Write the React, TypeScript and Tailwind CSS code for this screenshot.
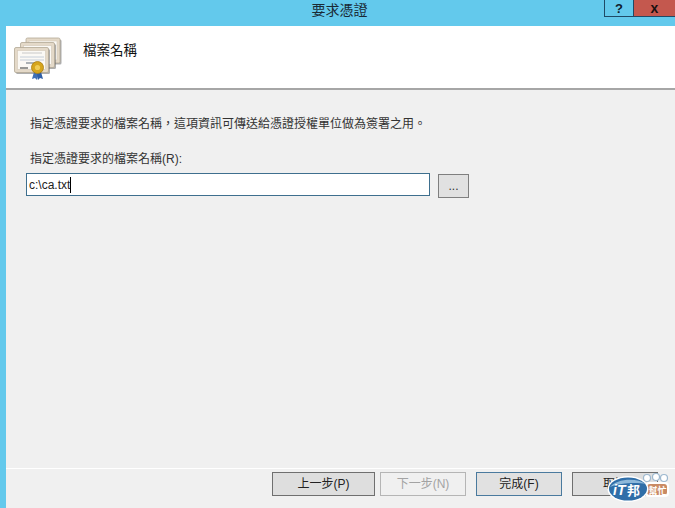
const font = "font-['Liberation_Sans','Noto_Sans_CJK_TC',sans-serif]";

function CertificateIcon() {
  const sheet = (x: number, y: number) => (
    <g>
      <rect x={x + 1.5} y={y + 1.5} width="34" height="25" rx="1.5" fill="#6b6b6b" opacity="0.55" />
      <rect x={x} y={y} width="34" height="25" rx="1.5" fill="#e4d9c8" stroke="#b3a895" strokeWidth="0.8" />
      <rect x={x + 3} y={y + 3} width="28" height="19" fill="#fbf9f5" stroke="#d3c9b8" strokeWidth="0.6" />
    </g>
  );
  return (
    <svg width="50" height="44" viewBox="0 0 50 44">
      {sheet(12, 1)}
      {sheet(6.5, 5.5)}
      {sheet(0.5, 10.5)}
      <path d="M8 16h20" stroke="#c9c9c9" strokeWidth="1" />
      <path d="M6 20h24M6 23h24" stroke="#b9c4d2" strokeWidth="0.8" />
      <path d="M12 26h12" stroke="#77808c" strokeWidth="1.2" />
      <path d="M6 31h8" stroke="#555" strokeWidth="1.2" />
      <path d="M20 35l-2 7 3-1 2 2 2-7z" fill="#3f6fb5" />
      <path d="M27 35l2 7-3-1-2 2-1-7z" fill="#2f5ea6" />
      <circle cx="23.5" cy="30.5" r="6" fill="#d6a51c" stroke="#a87c12" strokeWidth="0.8" />
      <circle cx="23.5" cy="30.5" r="2.6" fill="#f0cc55" />
    </svg>
  );
}

function Watermark() {
  return (
    <svg width="69" height="38" viewBox="0 0 69 38" className="absolute right-0 bottom-0">
      <g fill="#fff" stroke="#9db8cf" strokeWidth="1.2">
        <circle cx="41" cy="8" r="3.5" />
        <circle cx="50" cy="7" r="3.5" />
        <circle cx="58" cy="8" r="3.5" />
      </g>
      <rect x="39" y="12" width="24" height="15" rx="4" fill="#fff" />
      <rect x="41" y="14" width="20" height="11" rx="3" fill="#c98a63" />
      <text x="51.5" y="23.5" textAnchor="middle" fontSize="9" fontWeight="700" fill="#fff" fontFamily="'Noto Sans CJK TC', sans-serif">幫忙</text>
      <ellipse cx="22" cy="19" rx="20.5" ry="13" fill="#fff" />
      <ellipse cx="22" cy="19" rx="19" ry="11.5" fill="#2f6ea8" />
      <path d="M4 17C10 9 30 7 40 14 30 12 14 13 4 17z" fill="#8db8da" />
      <text x="7" y="25" fontSize="14" fontWeight="700" fontStyle="italic" fill="#fff" fontFamily="'Liberation Sans', sans-serif">iT</text>
      <text x="21" y="25" fontSize="13" fontWeight="700" fill="#fff" fontFamily="'Noto Sans CJK TC', sans-serif">邦</text>
    </svg>
  );
}

function WizardButton({ label, variant = 'normal', className = '' }: { label: string; variant?: 'normal' | 'disabled' | 'default'; className?: string }) {
  const look =
    variant === 'disabled'
      ? 'border-[#b5b5b5] bg-[#f0f0f0] text-[#a3a3a3]'
      : variant === 'default'
        ? 'border-[#4a7a9e] bg-[#e1e1e1] text-[#222]'
        : 'border-[#6f6f6f] bg-[#dedede] text-[#222]';
  return (
    <button className={`h-[24px] border text-[12px] leading-none ${look} ${className}`}>
      {label}
    </button>
  );
}

export default function App() {
  return (
    <div lang="zh-Hant" className={`relative flex h-[508px] w-[675px] flex-col overflow-hidden bg-[#63c9ec] pl-[6px] ${font}`}>
      {/* title bar */}
      <div className="relative h-[26px] shrink-0">
        <div className="pt-[1px] pr-[2px] text-center text-[14px] leading-[18px] text-[#1a2a35]">要求憑證</div>
        <div className="absolute top-0 right-0 flex h-[17px]">
          <div className="flex w-[29px] items-center justify-center border-b border-l border-[#1f4a66] text-[13px] leading-none font-bold text-[#10202c]">?</div>
          <div className="flex w-[42px] items-center justify-center border-b border-l border-[#1f4a66] bg-[#c4584e] text-[14px] leading-[16px] font-bold text-[#1a1010]">x</div>
        </div>
      </div>

      {/* header */}
      <div className="flex h-[64px] shrink-0 items-start border-b-2 border-[#a6a6a6] bg-white">
        <div className="mt-[11px] ml-[8px]">
          <CertificateIcon />
        </div>
        <h1 className="mt-[15px] ml-[19px] text-[13.5px] leading-[20px] font-normal text-[#111]">檔案名稱</h1>
      </div>

      {/* body */}
      <div className="flex min-h-0 flex-1 flex-col bg-[#f0f0f0]">
        <div className="flex-1 pt-[26px] pl-[24px]">
          <p className="text-[12px] leading-[16px] text-[#333]">指定憑證要求的檔案名稱，這項資訊可傳送給憑證授權單位做為簽署之用。</p>
          <p className="mt-[19px] text-[12px] leading-[16px] text-[#333]">指定憑證要求的檔案名稱(R):</p>
          <div className="mt-[6px] -ml-[4px] flex items-start gap-[8px]">
            <div className="flex h-[23px] w-[404px] items-center border border-[#3e6f8e] bg-white pl-[2px] text-[12px] text-[#222]">
              c:\ca.txt<span className="h-[16px] w-px bg-black" />
            </div>
            <button className="mt-px h-[24px] w-[31px] border border-[#7f7f7f] bg-[#e1e1e1] text-[12px] leading-none text-[#333]">...</button>
          </div>
        </div>

        {/* footer */}
        <div className="flex h-[40px] shrink-0 items-start border-t border-white pt-[3px] pl-[266px]">
          <WizardButton label="上一步(P)" className="w-[103px]" />
          <WizardButton label="下一步(N)" variant="disabled" className="ml-[5px] w-[86px]" />
          <WizardButton label="完成(F)" variant="default" className="ml-[10px] w-[86px]" />
          <WizardButton label="取消" className="ml-[10px] w-[86px]" />
        </div>
      </div>

      <Watermark />
    </div>
  );
}
